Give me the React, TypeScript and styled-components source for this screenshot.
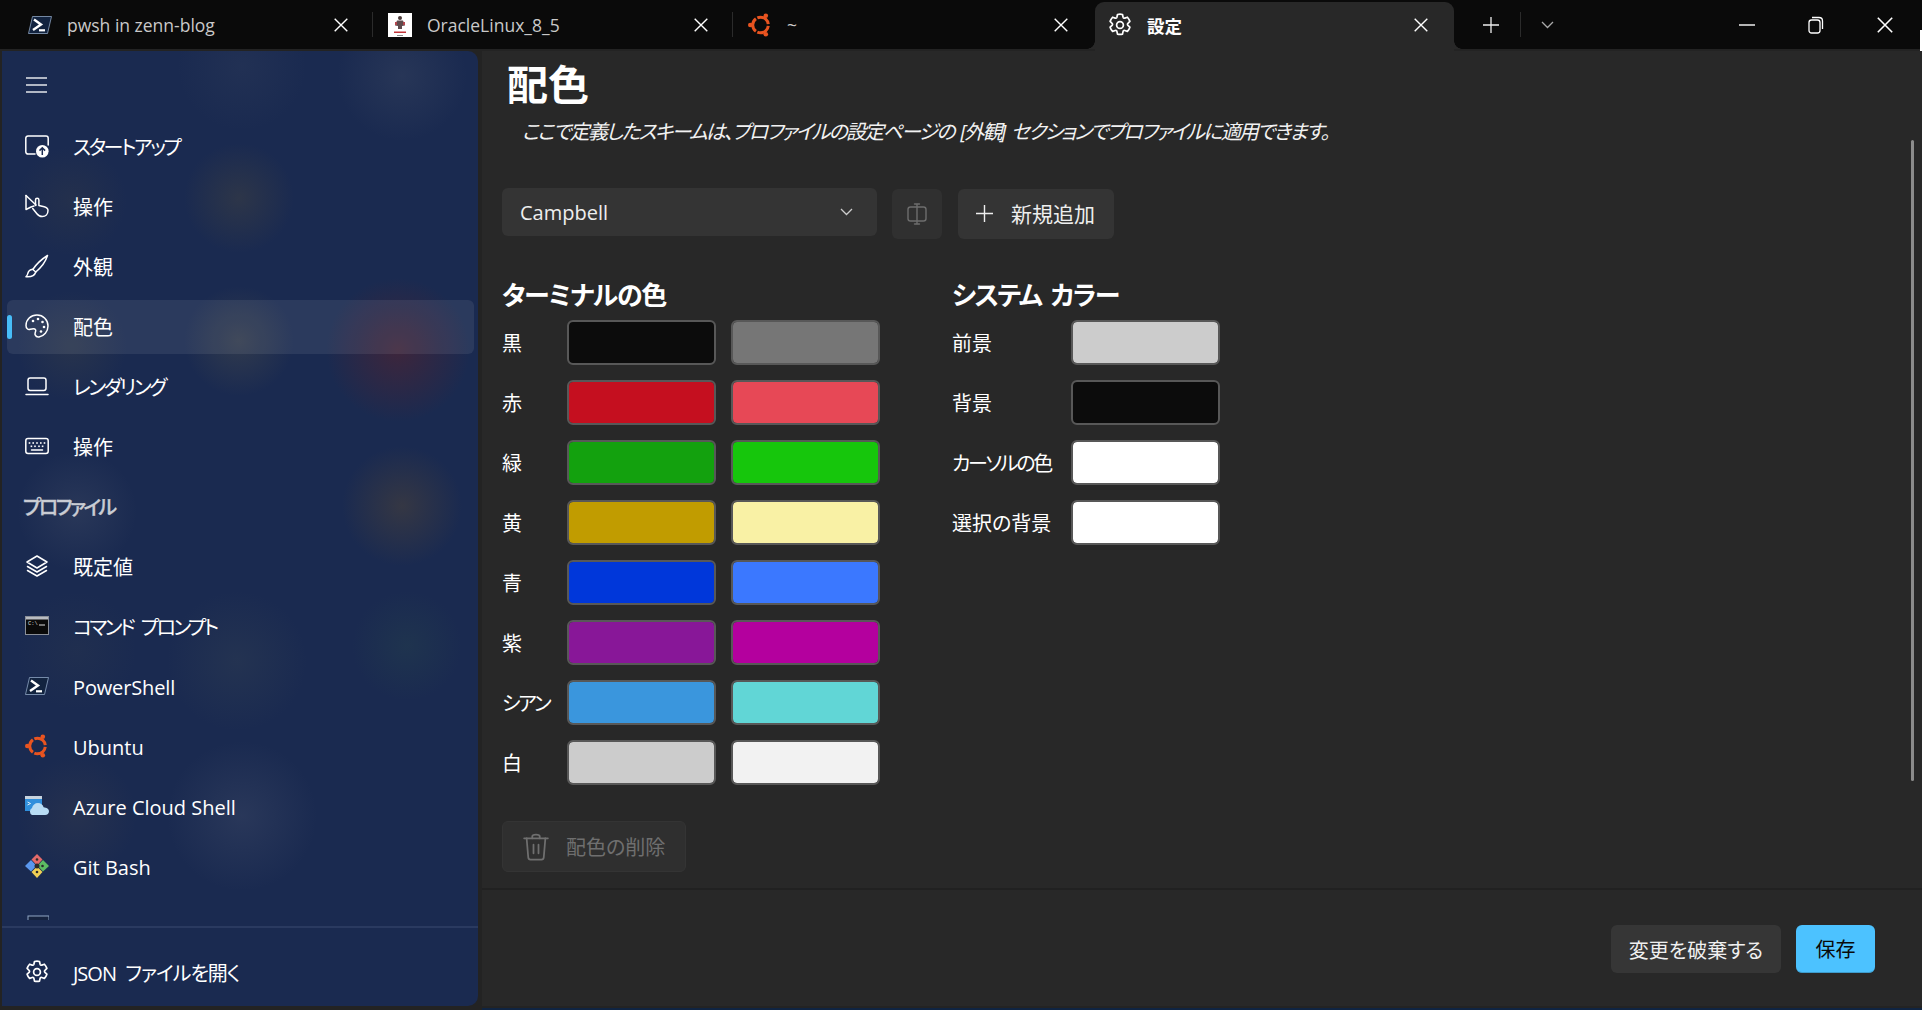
import { ReactNode } from 'react';
import styled, { createGlobalStyle } from 'styled-components';

const GlobalStyle = createGlobalStyle`
  html, body {
    margin: 0;
    padding: 0;
    background: #0a0a0a;
    overflow: hidden;
  }
  * { box-sizing: border-box; }
`;

const FONT = '"Open Sans", "Noto Sans CJK JP", sans-serif';

const Root = styled.div`
  position: relative;
  width: 1922px;
  height: 1010px;
  display: flex;
  flex-direction: column;
  overflow: hidden;
  background: #222;
  color: #fff;
  font-family: ${FONT};
  font-feature-settings: 'palt';
`;

/* title bar */
const TitleBar = styled.div`
  position: relative;
  height: 49px;
  flex: none;
  display: flex;
  padding-left: 13px;
  background: #0a0a0a;
`;

const Tab = styled.div`
  width: 359px;
  height: 49px;
  display: flex;
  align-items: center;
  padding-left: 15px;
  font-size: 17.5px;
  color: #c9c9c9;
`;

const ActiveTab = styled(Tab)`
  position: relative;
  margin: 2px 0 0 3px;
  padding: 0 2px 3px 13px;
  color: #fff;
  font-weight: 600;
  background: #282828;
  border-radius: 9px 9px 0 0;
`;

const TabFlare = styled.i<{ $side: 'left' | 'right' }>`
  position: absolute;
  bottom: 2px;
  width: 8px;
  height: 8px;
  ${({ $side }) =>
    $side === 'left'
      ? 'left: -8px; background: radial-gradient(circle at 0 0, transparent 7.5px, #282828 8px);'
      : 'right: -8px; background: radial-gradient(circle at 100% 0, transparent 7.5px, #282828 8px);'}
`;

const TabSep = styled.span`
  width: 1px;
  height: 25px;
  flex: none;
  align-self: center;
  background: #2b2b2b;
`;

const TabIcon = styled.span`
  width: 24px;
  height: 24px;
  flex: none;
  display: flex;
  align-items: center;
  justify-content: center;
  margin-right: 15px;
`;

const TabClose = styled.span`
  margin-left: auto;
  margin-right: 24px;
  width: 14px;
  height: 14px;
  display: flex;
  color: #fff;
`;

const AddButton = styled.div`
  width: 66px;
  padding-left: 8px;
  display: flex;
  align-items: center;
  justify-content: center;
  color: #eee;
`;

const DropButton = styled.div`
  width: 52px;
  display: flex;
  align-items: center;
  justify-content: center;
  color: #aaa;
`;

const WindowControls = styled.div`
  margin-left: auto;
  display: flex;
  align-items: center;
  gap: 53px;
  padding-right: 29px;
  color: #fff;
`;

const EdgeSliver = styled.div`
  position: absolute;
  right: 0;
  top: 30px;
  width: 2px;
  height: 48px;
  background: #fff;
`;

/* body */
const Body = styled.div`
  flex: 1;
  display: flex;
  min-height: 0;
  padding: 2px 0 0 2px;
  gap: 4px;
  background: #232323;
`;

const Sidebar = styled.aside`
  width: 476px;
  height: 955px;
  flex: none;
  display: flex;
  flex-direction: column;
  padding: 7px 0 6px;
  border-radius: 0 10px 10px 0;
  background-color: #1a2a50;
  background-image:
    radial-gradient(circle 72px at 396px 299px, rgba(110, 32, 32, 0.42), transparent),
    radial-gradient(circle 55px at 237px 147px, rgba(105, 90, 50, 0.24), transparent),
    radial-gradient(circle 55px at 70px 150px, rgba(105, 90, 50, 0.12), transparent),
    radial-gradient(circle 55px at 237px 290px, rgba(120, 110, 70, 0.24), transparent),
    radial-gradient(circle 55px at 70px 295px, rgba(110, 100, 60, 0.16), transparent),
    radial-gradient(circle 60px at 400px 455px, rgba(115, 85, 40, 0.3), transparent),
    radial-gradient(circle 65px at 400px 25px, rgba(120, 125, 130, 0.14), transparent),
    radial-gradient(circle 65px at 240px 15px, rgba(120, 125, 130, 0.08), transparent),
    radial-gradient(circle 60px at 75px 460px, rgba(150, 150, 150, 0.12), transparent),
    radial-gradient(circle 55px at 405px 595px, rgba(60, 110, 70, 0.14), transparent),
    radial-gradient(circle 70px at 235px 610px, rgba(100, 110, 90, 0.13), transparent),
    radial-gradient(circle 60px at 75px 600px, rgba(100, 100, 70, 0.08), transparent),
    radial-gradient(circle 75px at 240px 765px, rgba(120, 125, 140, 0.16), transparent),
    radial-gradient(circle 60px at 75px 765px, rgba(120, 100, 70, 0.12), transparent);
`;

const NavRow = styled.div<{ $selected?: boolean }>`
  position: relative;
  height: 54px;
  flex: none;
  display: flex;
  align-items: center;
  margin: 0 4px 0 5px;
  padding: 0 0 2px 18px;
  gap: 24px;
  border-radius: 6px;
  font-size: 20px;
  background: ${({ $selected }) => ($selected ? 'rgba(255, 255, 255, 0.08)' : 'transparent')};

  ${({ $selected }) =>
    $selected &&
    `
    &::before {
      content: '';
      position: absolute;
      left: 0;
      top: 15px;
      width: 5px;
      height: 24px;
      border-radius: 3px;
      background: #47bdf8;
    }
  `}
`;

const NavLabel = styled.span<{ $tracking?: number; $latin?: boolean }>`
  letter-spacing: ${({ $tracking }) => $tracking ?? 0}px;
  word-spacing: ${({ $latin }) => ($latin ? 0 : 5)}px;
  padding-top: ${({ $latin }) => ($latin ? 2 : 0)}px;
  white-space: nowrap;
`;

const NavIcon = styled.span`
  width: 24px;
  height: 24px;
  flex: none;
  display: flex;
  align-items: center;
  justify-content: center;
`;

const MenuRow = styled(NavRow)`
  margin-bottom: 8px;
  padding-bottom: 0;
`;

const NavList = styled.nav`
  flex: 1;
  min-height: 0;
  display: flex;
  flex-direction: column;
  gap: 6px;
  overflow: hidden;
`;

const NavHeading = styled.div`
  height: 54px;
  flex: none;
  display: flex;
  align-items: center;
  padding: 0 0 2px 21px;
  font-size: 20px;
  font-weight: 500;
  letter-spacing: -2.6px;
  color: #c9ccd3;
  -webkit-text-stroke: 0.3px #c9ccd3;
`;

const NavFooter = styled.div`
  flex: none;
  margin-top: 6px;
  padding-top: 18px;
  border-top: 2px solid #2a3a60;
`;

/* settings page */
const Content = styled.main`
  flex: 1;
  min-width: 0;
  height: 955px;
  position: relative;
  display: flex;
  flex-direction: column;
  background: #282828;
`;

const Page = styled.div`
  flex: 1;
  min-height: 0;
  padding: 9px 0 0 20px;
`;

const PageTitle = styled.h1`
  margin: 0 0 0 5px;
  font-size: 41px;
  line-height: 48px;
  font-weight: 700;
`;

const PageNote = styled.p`
  margin: 12px 0 0 20px;
  font-size: 20px;
  line-height: 24px;
  font-style: italic;
  letter-spacing: -1.8px;
  word-spacing: 3px;
  color: #f2f2f2;
`;

const Toolbar = styled.div`
  display: flex;
  align-items: flex-start;
  margin-top: 44px;
`;

const SchemeSelect = styled.div`
  width: 375px;
  height: 48px;
  display: flex;
  align-items: center;
  justify-content: space-between;
  padding: 0 24px 0 18px;
  border-radius: 6px;
  background: #343434;
  font-size: 20px;
  color: #eee;
`;

const RenameButton = styled.div`
  width: 50px;
  height: 50px;
  margin: 1px 0 0 15px;
  display: flex;
  align-items: center;
  justify-content: center;
  border-radius: 6px;
  background: #303030;
  color: #6d6d6d;
`;

const AddSchemeButton = styled.div`
  width: 156px;
  height: 50px;
  margin: 1px 0 0 16px;
  display: flex;
  align-items: center;
  gap: 18px;
  padding: 0 0 2px 18px;
  border-radius: 6px;
  background: #343434;
  font-size: 21px;
  color: #eee;
`;

const Columns = styled.div`
  display: flex;
  gap: 72px;
  margin-top: 38px;
`;

const ColorColumn = styled.section`
  display: flex;
  flex-direction: column;
  gap: 15px;
`;

const SectionHeading = styled.h2<{ $tracking: number }>`
  margin: 0 0 -8px;
  height: 36px;
  font-size: 26px;
  line-height: 36px;
  font-weight: 700;
  letter-spacing: ${({ $tracking }) => $tracking}px;
  word-spacing: 4px;
`;

const ColorRow = styled.div`
  display: flex;
  height: 45px;
  align-items: center;
  font-size: 20px;
`;

const ColorLabel = styled.span<{ $width: number; $tracking?: number }>`
  width: ${({ $width }) => $width}px;
  flex: none;
  padding-top: 2px;
  line-height: 45px;
  letter-spacing: ${({ $tracking }) => $tracking ?? 0}px;
  white-space: nowrap;
`;

const SwatchPair = styled.div`
  display: flex;
  gap: 15px;
`;

const Swatch = styled.div<{ $color: string }>`
  width: 149px;
  height: 45px;
  border: 2px solid #585858;
  border-radius: 6px;
  background: ${({ $color }) => $color};
  background-clip: padding-box;
`;

const DeleteButton = styled.div`
  width: 184px;
  height: 51px;
  margin-top: 21px;
  display: flex;
  align-items: center;
  gap: 15px;
  padding-left: 18px;
  border: 1px solid #343434;
  border-radius: 6px;
  background: #2f2f2f;
  font-size: 20px;
  color: #6f6f6f;
`;

const ScrollThumb = styled.div`
  position: absolute;
  right: 8px;
  top: 89px;
  width: 3px;
  height: 641px;
  border-radius: 2px;
  background: #8c8c8c;
`;

const Footer = styled.footer`
  height: 118px;
  flex: none;
  display: flex;
  justify-content: flex-end;
  gap: 15px;
  padding: 35px 47px 0 0;
  border-top: 2px solid #212121;
`;

const DiscardButton = styled.div`
  width: 170px;
  height: 48px;
  display: flex;
  align-items: center;
  justify-content: center;
  border-radius: 6px;
  background: #363636;
  font-size: 20px;
  color: #f0f0f0;
`;

const SaveButton = styled.div`
  width: 79px;
  height: 48px;
  display: flex;
  align-items: center;
  justify-content: center;
  border-radius: 6px;
  border-bottom: 1px solid #3e9ccc;
  background: #4cc2ff;
  font-size: 20px;
  color: #0a0a0a;
`;

const BottomEdge = styled.div`
  position: absolute;
  left: 482px;
  right: 0;
  bottom: 0;
  height: 2px;
  background: #0f2442;
`;

/* icons */
const Line = ({ size = 24, w = 1.5, children }: { size?: number; w?: number; children: ReactNode }) => (
  <svg width={size} height={size} viewBox="0 0 24 24" fill="none" stroke="currentColor" strokeWidth={w} strokeLinecap="round" strokeLinejoin="round">
    {children}
  </svg>
);

const CloseIcon = ({ size = 14 }: { size?: number }) => (
  <svg width={size} height={size} viewBox="0 0 14 14" stroke="currentColor" strokeWidth="1.4" fill="none">
    <path d="M0.7 0.7L13.3 13.3M13.3 0.7L0.7 13.3" />
  </svg>
);

const GEAR =
  'M12 1.2c.9 0 1.7.1 2.5.3l.6 2.7c.2.7 1 1.1 1.7.9l2.6-.9c1.1 1.2 1.9 2.6 2.5 4.2l-2 1.9c-.6.5-.6 1.5 0 2l2 1.9c-.5 1.6-1.4 3-2.5 4.2l-2.6-.9c-.7-.2-1.5.2-1.7.9l-.6 2.7c-1.6.4-3.4.4-5 0l-.6-2.7c-.2-.7-1-1.1-1.7-.9l-2.6.9c-1.1-1.2-2-2.6-2.5-4.2l2-1.9c.6-.5.6-1.5 0-2l-2-1.9c.6-1.6 1.4-3 2.5-4.2l2.6.9c.7.2 1.5-.2 1.7-.9l.6-2.7c.8-.2 1.6-.3 2.5-.3z';

const GearIcon = () => (
  <Line w={1.7}>
    <path d={GEAR} />
    <circle cx="12" cy="12" r="3.4" />
  </Line>
);

const StartupIcon = () => (
  <svg width="24" height="24" viewBox="0 0 24 24">
    <path d="M10 20H3a2.2 2.2 0 0 1-2.2-2.2V4.2A2.2 2.2 0 0 1 3 2h18a2.2 2.2 0 0 1 2.2 2.2V11" fill="none" stroke="#fff" strokeWidth="1.5" strokeLinecap="round" />
    <circle cx="17.3" cy="17.3" r="6.3" fill="#fff" />
    <path d="M17.3 21v-7M14.5 16.6l2.8-2.8 2.8 2.8" fill="none" stroke="#1a2a50" strokeWidth="1.5" />
  </svg>
);

const InteractIcon = () => (
  <Line>
    <path d="M1 1.5V15.5L6 13l3-1" />
    <path d="M1 1.5 11 11" />
    <path d="M10.5 11.5V6a1.7 1.7 0 0 1 3.4 0v5.5l5.3 1.3c2.2.6 3.8 1.7 3.8 3.7 0 3.8-2.5 6-5.8 6-2.7 0-4-1-5.3-2.8l-4.2-5.2" />
  </Line>
);

const BrushIcon = () => (
  <Line>
    <path d="M22.5 1.5C17 5 11 10.5 7.8 15.5l3 2.5C15.5 14 20.5 8 22.5 1.5z" />
    <path d="M7.8 15.2c-2.8.3-4.5 2-5 4.3-.2 1.2-.8 2.2-1.8 3.2 3.5.3 8.5-.6 9.8-4.7" />
  </Line>
);

const PaletteIcon = () => (
  <svg width="24" height="24" viewBox="0 0 24 24" fill="none">
    <path d="M12 1C5.8 1 1 5.7 1 11.5c0 3 2 4.5 4.2 3.8 2.2-.7 4.3-1.3 5.3.3 1 1.5-1.2 3.2-.3 5.3.7 1.7 2.3 2.3 3.8 2.1C19 22 23 17.5 23 12 23 5.8 18.2 1 12 1z" stroke="#fff" strokeWidth="1.5" />
    <g fill="#fff">
      <circle cx="8" cy="7" r="1.3" />
      <circle cx="13" cy="5" r="1.3" />
      <circle cx="17.5" cy="8" r="1.3" />
      <circle cx="19" cy="13" r="1.3" />
      <circle cx="16" cy="17.5" r="1.3" />
    </g>
  </svg>
);

const LaptopIcon = () => (
  <Line>
    <rect x="3" y="4" width="18" height="12.5" rx="2.2" />
    <path d="M1 20.5h22" />
  </Line>
);

const KeyboardIcon = () => (
  <svg width="24" height="24" viewBox="0 0 24 24" fill="none">
    <rect x="0.8" y="4.5" width="22.4" height="15" rx="2.2" stroke="#fff" strokeWidth="1.5" />
    <path d="M6.5 16h11" stroke="#fff" strokeWidth="1.5" strokeLinecap="round" />
    <g fill="#fff">
      {[4.5, 8.2, 12, 15.8, 19.5].map((x) => (
        <rect key={x} x={x - 0.8} y="8.2" width="1.6" height="1.6" />
      ))}
      {[6.4, 10, 14, 17.6].map((x) => (
        <rect key={x} x={x - 0.8} y="11.5" width="1.6" height="1.6" />
      ))}
    </g>
  </svg>
);

const LayersIcon = () => (
  <Line>
    <path d="M12 2 2 8l10 6 10-6z" />
    <path d="M2.5 12.5 12 18l9.5-5.5" />
    <path d="M2.5 16.5 12 22l9.5-5.5" />
  </Line>
);

const CmdIcon = () => (
  <svg width="24" height="24" viewBox="0 0 24 24">
    <rect x="0.5" y="2.5" width="23" height="18" fill="#0a0a0a" stroke="#8a8f98" />
    <rect x="1" y="3" width="22" height="2.5" fill="#b9bcc2" />
    <text x="3" y="11" fontSize="5.5" fill="#ddd" fontFamily="Liberation Mono, monospace">C:\</text>
    <path d="M14 11h6" stroke="#ddd" strokeWidth="1" />
  </svg>
);

const PowerShellIcon = () => (
  <svg width="24" height="24" viewBox="0 0 24 24">
    <path d="M4.5 3.5h19L19.5 20.5H.5z" fill="#12233f" stroke="#8fa6c4" strokeWidth="0.8" />
    <path d="M6 6.5l7 5-8 5.5" fill="none" stroke="#fff" strokeWidth="2.4" />
    <path d="M11 17.3h6" stroke="#fff" strokeWidth="2.2" />
  </svg>
);

const UbuntuIcon = () => (
  <svg width="24" height="24" viewBox="0 0 24 24">
    <circle cx="12.5" cy="12" r="7.8" fill="none" stroke="#e95420" strokeWidth="3" pathLength={120} strokeDasharray="36 4" strokeDashoffset={-2} />
    <g fill="#e95420">
      <circle cx="2.3" cy="12" r="2.3" />
      <circle cx="17.8" cy="2.7" r="2.3" />
      <circle cx="17.8" cy="21.3" r="2.3" />
    </g>
  </svg>
);

const AzureIcon = () => (
  <svg width="24" height="24" viewBox="0 0 24 24">
    <rect x="0" y="2" width="17" height="15" fill="#2f8fdc" />
    <rect x="0" y="2" width="17" height="3" fill="#c7d3de" />
    <path d="M2.5 8l3 1.5-3 1.5" stroke="#fff" fill="none" strokeWidth="0.8" />
    <path d="M7 21a4 4 0 0 1 0-7c.6-3 3-5 6-5 2.7 0 5 1.8 5.6 4.3 3 .2 5.4 1.7 5.4 4 0 2.3-1.5 3.7-4 3.7z" fill="#b8dcf4" />
  </svg>
);

const GitBashIcon = () => (
  <svg width="24" height="24" viewBox="0 0 24 24">
    <path d="M12 0l5.5 5.5-5.5 6-5.500-6z" fill="#e36a6a" />
    <path d="M6 6l5.5 5.8L6 17.5 0 12z" fill="#5a97ee" />
    <path d="M18 6l6 6-6 5.5-5.500-5.700z" fill="#5dbb63" />
    <path d="M12 12.5l5.500 5.500-5.500 6-5.500-6z" fill="#f0cf55" />
    <circle cx="12" cy="12" r="2.5" fill="#2b2b2b" />
    <circle cx="12" cy="5.5" r="1.3" fill="#2b2b2b" />
    <circle cx="17.5" cy="12" r="1.3" fill="#2b2b2b" />
    <circle cx="12" cy="18" r="1.3" fill="#2b2b2b" />
  </svg>
);

const ClippedProfileIcon = () => (
  <svg width="24" height="24" viewBox="0 0 24 24">
    <rect x="3" y="2" width="21" height="18" fill="#16233f" stroke="#8fa6c4" />
  </svg>
);

const OracleIcon = () => (
  <svg width="24" height="24" viewBox="0 0 24 24">
    <rect width="24" height="24" fill="#fff" />
    <circle cx="12" cy="5" r="2" fill="#4b3a38" />
    <path d="M9 7.5h6l2 5-3 .5v3h-4v-3l-3-.5z" fill="#5d4a4c" />
    <path d="M7 9h2v3H7zM15 9h2v3h-2z" fill="#b3454c" />
    <rect x="6" y="18.5" width="12" height="1.5" fill="#c2343a" />
    <rect x="9" y="22" width="6" height="1" fill="#888" />
  </svg>
);

const RenameIcon = () => (
  <Line size={24} w={1.4}>
    <rect x="3" y="5" width="18" height="14" rx="2.5" />
    <path d="M12 2v20M9.5 2h5M9.5 22h5" />
  </Line>
);

const TrashIcon = () => (
  <Line size={30} w={1.4}>
    <path d="M2.5 5h19" />
    <path d="M9 5V3.5C9 2.500 10 2 12 2s3 .5 3 1.500V5" />
    <path d="M4.5 5l1.300 15.300c.1 1.100.8 1.700 1.800 1.700h8.800c1 0 1.700-.6 1.800-1.700L19.500 5" />
    <path d="M10 10v7M14 10v7" />
  </Line>
);

type NavItem = { label: string; icon?: ReactNode; selected?: boolean; tracking?: number; latin?: boolean };

const NAV: NavItem[] = [
  { label: 'スタートアップ', icon: <StartupIcon />, tracking: -2.4 },
  { label: '操作', icon: <InteractIcon /> },
  { label: '外観', icon: <BrushIcon /> },
  { label: '配色', icon: <PaletteIcon />, selected: true },
  { label: 'レンダリング', icon: <LaptopIcon />, tracking: -2.3 },
  { label: '操作', icon: <KeyboardIcon /> },
  { label: 'プロファイル' },
  { label: '既定値', icon: <LayersIcon /> },
  { label: 'コマンド プロンプト', icon: <CmdIcon />, tracking: -2.6 },
  { label: 'PowerShell', icon: <PowerShellIcon />, tracking: -0.15, latin: true },
  { label: 'Ubuntu', icon: <UbuntuIcon />, latin: true },
  { label: 'Azure Cloud Shell', icon: <AzureIcon />, latin: true },
  { label: 'Git Bash', icon: <GitBashIcon />, latin: true },
  { label: 'PowerShell', icon: <ClippedProfileIcon />, tracking: -0.15, latin: true },
];

const TERMINAL_COLORS = [
  { label: '黒', dark: '#0c0c0c', light: '#767676' },
  { label: '赤', dark: '#c50f1f', light: '#e74856' },
  { label: '緑', dark: '#13a10e', light: '#16c60c' },
  { label: '黄', dark: '#c19c00', light: '#f9f1a5' },
  { label: '青', dark: '#0037da', light: '#3b78ff' },
  { label: '紫', dark: '#881798', light: '#b4009e' },
  { label: 'シアン', dark: '#3a96dd', light: '#61d6d6', tracking: -2.2 },
  { label: '白', dark: '#cccccc', light: '#f2f2f2' },
];

const SYSTEM_COLORS = [
  { label: '前景', color: '#cccccc' },
  { label: '背景', color: '#0c0c0c' },
  { label: 'カーソルの色', color: '#ffffff', tracking: -2.3 },
  { label: '選択の背景', color: '#ffffff' },
];

const TABS = [
  { title: 'pwsh in zenn-blog', icon: <PowerShellIcon /> },
  { title: 'OracleLinux_8_5', icon: <OracleIcon /> },
  { title: '~', icon: <UbuntuIcon /> },
];

export default function App() {
  return (
    <Root>
      <GlobalStyle />
      <TitleBar>
        {TABS.map((tab, i) => (
          <Tab key={i}>
            <TabIcon>{tab.icon}</TabIcon>
            {tab.title}
            <TabClose>
              <CloseIcon />
            </TabClose>
          </Tab>
        )).flatMap((el, i) => (i === 0 ? [el] : [<TabSep key={`s${i}`} />, el]))}
        <ActiveTab>
          <TabFlare $side="left" />
          <TabFlare $side="right" />
          <TabIcon>
            <GearIcon />
          </TabIcon>
          設定
          <TabClose>
            <CloseIcon />
          </TabClose>
        </ActiveTab>
        <AddButton>
          <svg width="16" height="16" viewBox="0 0 16 16" stroke="currentColor" strokeWidth="1.3">
            <path d="M8 0v16M0 8h16" />
          </svg>
        </AddButton>
        <TabSep />
        <DropButton>
          <svg width="13" height="8" viewBox="0 0 13 8" fill="none" stroke="currentColor" strokeWidth="1.3">
            <path d="M1 1l5.5 5.5L12 1" />
          </svg>
        </DropButton>
        <WindowControls>
          <svg width="16" height="16" viewBox="0 0 16 16" stroke="currentColor" strokeWidth="1.4">
            <path d="M0 8h16" />
          </svg>
          <svg width="16" height="18" viewBox="0 0 16 18" fill="none" stroke="currentColor" strokeWidth="1.3">
            <rect x="1" y="4" width="11" height="13" rx="2.5" />
            <path d="M4 1.5h7c2.2 0 3.5 1.3 3.5 3.5v8" />
          </svg>
          <CloseIcon size={16} />
        </WindowControls>
        <EdgeSliver />
      </TitleBar>

      <Body>
        <Sidebar>
          <MenuRow>
            <NavIcon>
              <svg width="24" height="20" viewBox="0 0 24 20" stroke="#e4e6ea" strokeWidth="1.5">
                <path d="M1 3h21M1 10h21M1 17h21" />
              </svg>
            </NavIcon>
          </MenuRow>
          <NavList>
            {NAV.map((item, i) =>
              item.icon ? (
                <NavRow key={i} $selected={item.selected}>
                  <NavIcon>{item.icon}</NavIcon>
                  <NavLabel $tracking={item.tracking} $latin={item.latin}>{item.label}</NavLabel>
                </NavRow>
              ) : (
                <NavHeading key={i}>{item.label}</NavHeading>
              ),
            )}
          </NavList>
          <NavFooter>
            <NavRow>
              <NavIcon>
                <GearIcon />
              </NavIcon>
              <NavLabel $tracking={-1}>JSON ファイルを開く</NavLabel>
            </NavRow>
          </NavFooter>
        </Sidebar>

        <Content>
          <Page>
            <PageTitle>配色</PageTitle>
            <PageNote>ここで定義したスキームは、プロファイルの設定ページの [外観] セクションでプロファイルに適用できます。</PageNote>
            <Toolbar>
              <SchemeSelect>
                Campbell
                <svg width="13" height="8" viewBox="0 0 13 8" fill="none" stroke="#ccc" strokeWidth="1.3">
                  <path d="M1 1l5.5 5.5L12 1" />
                </svg>
              </SchemeSelect>
              <RenameButton>
                <RenameIcon />
              </RenameButton>
              <AddSchemeButton>
                <svg width="17" height="17" viewBox="0 0 17 17" stroke="#eee" strokeWidth="1.4">
                  <path d="M8.5 0v17M0 8.5h17" />
                </svg>
                新規追加
              </AddSchemeButton>
            </Toolbar>
            <Columns>
              <ColorColumn>
                <SectionHeading $tracking={-1.3}>ターミナルの色</SectionHeading>
                {TERMINAL_COLORS.map((c) => (
                  <ColorRow key={c.label}>
                    <ColorLabel $width={65} $tracking={c.tracking}>{c.label}</ColorLabel>
                    <SwatchPair>
                      <Swatch $color={c.dark} />
                      <Swatch $color={c.light} />
                    </SwatchPair>
                  </ColorRow>
                ))}
                <DeleteButton>
                  <TrashIcon />
                  配色の削除
                </DeleteButton>
              </ColorColumn>
              <ColorColumn>
                <SectionHeading $tracking={-1.6}>システム カラー</SectionHeading>
                {SYSTEM_COLORS.map((c) => (
                  <ColorRow key={c.label}>
                    <ColorLabel $width={119} $tracking={c.tracking}>{c.label}</ColorLabel>
                    <Swatch $color={c.color} />
                  </ColorRow>
                ))}
              </ColorColumn>
            </Columns>
          </Page>
          <ScrollThumb />
          <Footer>
            <DiscardButton>変更を破棄する</DiscardButton>
            <SaveButton>保存</SaveButton>
          </Footer>
        </Content>
      </Body>
      <BottomEdge />
    </Root>
  );
}
